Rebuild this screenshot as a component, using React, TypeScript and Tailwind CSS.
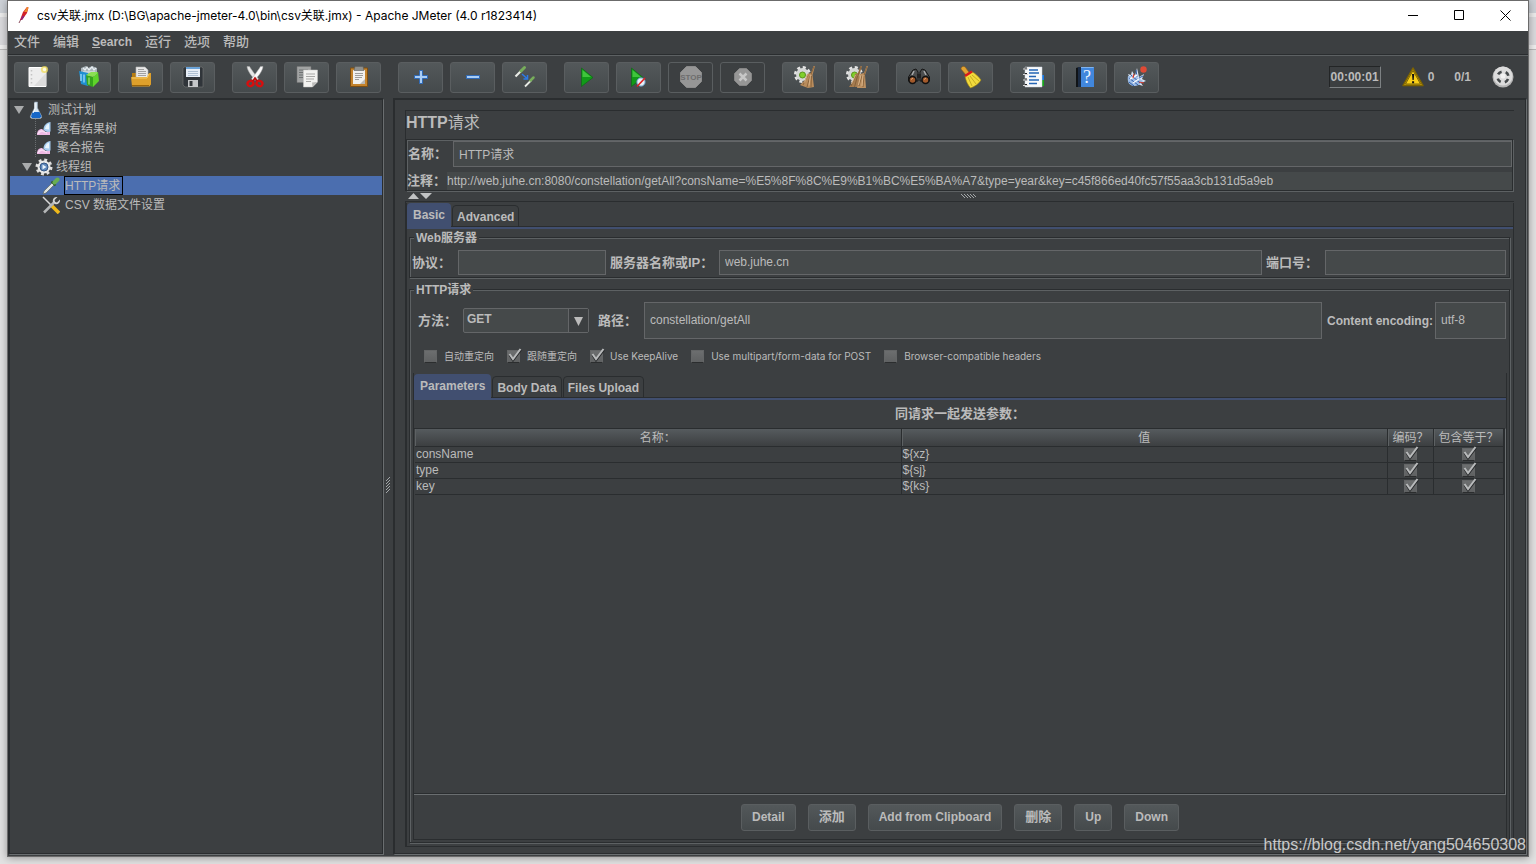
import type { ReactNode } from 'react'
import clsx from 'clsx'

/* ---------- Toolbar icons ---------- */

function Icon({ children, size = 24 }: { children: ReactNode; size?: number }) {
  return (
    <svg width={size} height={size} viewBox={`0 0 ${size} ${size}`} fill="none" aria-hidden="true">
      {children}
    </svg>
  )
}

const NewIcon = () => (
  <Icon>
    <path d="M4 2.5h17v19H4z" fill="#ededed" stroke="#fff" />
    <path d="M6.5 5v14" stroke="#c4c4c4" strokeWidth="1.5" strokeDasharray="1.5 2.5" />
    <path d="M21 8v13H9z" fill="#dcdcdc" />
    <circle cx="19.5" cy="4.5" r="3.6" fill="#f0dc5a" opacity=".75" />
    <circle cx="19.5" cy="4.5" r="1.7" fill="#fffbe0" />
  </Icon>
)

const TemplatesIcon = () => (
  <Icon>
    <path d="M4 3l5-2 2 2 4-2 5 2v8H4z" fill="#a9b4ba" />
    <path d="M6 3l2 2 2-3 2 3 3-3 2 3 2-2M6 7h12" stroke="#e9eff2" strokeWidth="1.2" />
    <path d="M2 6l9 2v13l-7-2z" fill="#1f8fd1" />
    <path d="M4 9v7M7 9.5v8" stroke="#8fd3f5" strokeWidth="1.5" />
    <path d="M9 10l7 2v10l-6-2z" fill="#35a51c" />
    <path d="M16 12l5-5 1 9-6 6z" fill="#5fd32b" />
    <path d="M9 10l5-3 7 0-5 5z" fill="#8be052" />
    <path d="M12 12.5v7" stroke="#b5f08d" />
  </Icon>
)

const OpenIcon = () => (
  <Icon>
    <path d="M3 8h4l2 2h13v10H3z" fill="#b77d12" />
    <path d="M7 2h9l3 3v9H7z" fill="#e9e9e9" stroke="#b5b5b5" strokeWidth=".6" />
    <path d="M9 4.5h6M9 6.5h8M9 8.5h8M9 10.5h8" stroke="#8e8e8e" strokeWidth=".8" />
    <path d="M2 12h16l2-4h2v11l-1.5 2.5H3z" fill="#dea02b" />
    <path d="M3 13h15l2-4" stroke="#f6cd6a" />
    <path d="M3 20.5h17" stroke="#9c6508" />
  </Icon>
)

const SaveIcon = () => (
  <Icon>
    <path d="M3 2h18l1 1v19H4l-2-2V3z" fill="#30353a" stroke="#777" strokeWidth=".6" />
    <path d="M5 2h14v10H5z" fill="#e6edf6" />
    <path d="M5 2h14v2H5z" fill="#6ba3d8" />
    <path d="M7 6.5h10M7 8.5h10M7 10.5h10" stroke="#a1b4ca" strokeWidth=".8" />
    <path d="M7 15h10v7H7z" fill="#c5c7c9" />
    <path d="M8.5 16h3v5h-3z" fill="#34383c" />
  </Icon>
)

const CutIcon = () => (
  <Icon>
    <path d="M4 1.5C4.5 6 9 12 13.5 16l2-2C12.5 10 8.5 5 6.5 1.5z" fill="#e6e6e6" stroke="#aaa" strokeWidth=".5" />
    <path d="M20 1.5C19.5 6 15 12 10.5 16l-2-2c3-4 7-9 9-12.5z" fill="#fafafa" stroke="#aaa" strokeWidth=".5" />
    <ellipse cx="7.5" cy="18.5" rx="3" ry="2.5" stroke="#d40f0f" strokeWidth="2.4" transform="rotate(-30 7.5 18.5)" />
    <ellipse cx="16.5" cy="18.5" rx="3" ry="2.5" stroke="#d40f0f" strokeWidth="2.4" transform="rotate(30 16.5 18.5)" />
    <path d="M10 16l2-3 2 3" stroke="#b80c0c" strokeWidth="1.8" />
  </Icon>
)

const CopyIcon = () => (
  <Icon>
    <path d="M2 1.5h14v16H2z" fill="#a1a3a3" stroke="#777" strokeWidth=".5" />
    <path d="M4 5h9M4 7.5h4M4 10h4M4 12.5h4" stroke="#6f7272" />
    <path d="M8.5 5h14v12l-5 5h-9z" fill="#f2f2f0" stroke="#c7c7c5" strokeWidth=".5" />
    <path d="M11 9h9M11 11.5h9M11 14h8M11 16.5h5" stroke="#a7a7a5" />
    <path d="M22 17l-4.5 5-.5-4.5z" fill="#bcbcba" />
  </Icon>
)

const PasteIcon = () => (
  <Icon>
    <path d="M3.5 3h17v18.5h-17z" fill="#c3832c" stroke="#7d4e12" />
    <path d="M6 5h12v14H6z" fill="#f1f1ef" />
    <path d="M8 1.5h8l1 4H7z" fill="#8e908e" stroke="#5e605e" strokeWidth=".6" />
    <path d="M8 8.5h8M8 10.5h8M8 12.5h7M8 14.5h4" stroke="#949492" strokeWidth=".9" />
    <path d="M18 14l-5 5h5z" fill="#b9b9b7" />
  </Icon>
)

const PlusIcon = () => (
  <Icon>
    <path d="M10.5 5.5h3v5h5v3h-5v5h-3v-5h-5v-3h5z" fill="#a9cdf5" stroke="#2f6ab8" />
  </Icon>
)

const MinusIcon = () => (
  <Icon>
    <path d="M5.5 10.5h13v3h-13z" fill="#a9cdf5" stroke="#2f6ab8" />
  </Icon>
)

const ToggleIcon = () => (
  <Icon>
    <path d="M2.5 11.5l6-6" stroke="#e9ebe6" strokeWidth="2.2" />
    <path d="M8 6l3.5-3.5" stroke="#77ad5b" strokeWidth="3" strokeLinecap="round" />
    <path d="M12 21.5l6-6" stroke="#e9ebe6" strokeWidth="1.8" />
    <path d="M17.5 15.5l3-3" stroke="#77ad5b" strokeWidth="2.5" strokeLinecap="round" />
    <path d="M9 9l5 4.5M14.5 10v4h-4" stroke="#2d79e6" strokeWidth="1.5" />
  </Icon>
)

const StartIcon = () => (
  <Icon>
    <path d="M6.5 3l11.5 9.5-11.5 9z" fill="#119a18" stroke="#0a6410" strokeWidth=".6" />
    <path d="M7.5 5l8.5 7H7.500z" fill="#3fc43c" />
  </Icon>
)

const StartNoTimersIcon = () => (
  <Icon>
    <path d="M4.5 3l11.5 9.5-11.5 9z" fill="#119a18" stroke="#0a6410" strokeWidth=".6" />
    <path d="M5.5 5l8.5 7H5.500z" fill="#3fc43c" />
    <circle cx="14" cy="17" r="4.2" fill="#e5f0f8" stroke="#5b8db5" />
    <path d="M10 21.5l8-8.5" stroke="#e22020" strokeWidth="1.6" />
  </Icon>
)

const StopIcon = () => (
  <Icon>
    <path d="M7.5 1.5h9l6 6v9l-6 6h-9l-6-6v-9z" fill="#969696" stroke="#8b8b8b" />
    <text x="12" y="15" textAnchor="middle" fontSize="8" fontWeight="bold" fontFamily="Liberation Sans Narrow, Liberation Sans" fill="#6d6d6d">
      STOP
    </text>
  </Icon>
)

const ShutdownIcon = () => (
  <Icon>
    <path d="M8.5 3.5h7l5 5v7l-5 5h-7l-5-5v-7z" fill="#969696" stroke="#858585" />
    <path d="M8.5 8.5l7 7M15.5 8.5l-7 7" stroke="#c7c7c7" strokeWidth="2.5" />
  </Icon>
)

const GearShape = () => (
  <>
    <circle cx="9.5" cy="9.5" r="7" stroke="#e4e4e4" strokeWidth="3" strokeDasharray="3 2.5" />
    <circle cx="9.5" cy="9.5" r="6.5" fill="#d5d7d6" />
    <circle cx="9.5" cy="10" r="3" fill="#7fd02b" stroke="#5a941d" />
  </>
)

const ClearIcon = () => (
  <Icon>
    <GearShape />
    <path d="M20.5 1H22l-2.5 9L21 22l-6 1-8-3 5-5 2-6 4-1z" fill="#b98c5c" />
    <path d="M21 1.5l-3.500 9M15 10l-5 10M17 11l-3 11M18.5 11l-.5 11" stroke="#7f5a33" strokeWidth=".8" />
    <path d="M14.5 9.5l-3 8M17.5 9.500l-1.500 11" stroke="#dcb88d" strokeWidth=".9" />
  </Icon>
)

const ClearAllIcon = () => (
  <Icon>
    <GearShape />
    <path d="M15.5 1H17l-2.500 9L16 22H4l5-7 1-6 3-1z" fill="#a67c50" />
    <path d="M21.5 1H23l-3 9 1 13h-9l2-8 1-6 4-1z" fill="#bd9162" />
    <path d="M16 1.5l-3 9M11 10L6 21M12.5 11l-3 11M22 1.5l-3 9M17 10l-3 11M19 11l-1 11" stroke="#7f5a33" strokeWidth=".8" />
    <path d="M10.5 10l-4 9M16 10l-2.500 10M18 10l-1 11" stroke="#dcb88d" strokeWidth=".9" />
  </Icon>
)

const SearchIcon = () => (
  <Icon>
    <path d="M6 5l3-1 2 3v9H1.5v-4z" fill="#4b4d4e" stroke="#161616" />
    <path d="M18 5l-3-1-2 3v9h9.5v-4z" fill="#4b4d4e" stroke="#161616" />
    <path d="M5 10l2-4M19 10l-2-4" stroke="#a9abac" strokeWidth="1.5" />
    <path d="M10 9h4v4h-4z" fill="#222" />
    <circle cx="5.5" cy="15" r="3.5" fill="#a35a2b" stroke="#111" strokeWidth="1.5" />
    <circle cx="18.5" cy="15" r="3.5" fill="#a35a2b" stroke="#111" strokeWidth="1.5" />
    <path d="M4 14.5L6 13M17 14.5l2-1.5" stroke="#e2a474" />
  </Icon>
)

const BroomIcon = () => (
  <Icon>
    <path d="M2 4c0-2.5 3-3.5 4.5-1.5L10.500 8 7 10z" fill="#e0a333" stroke="#99600e" strokeWidth=".6" />
    <path d="M6 11l6.5-4.5c4 2 7 5 9.5 8.5-2 3.5-6 6.5-10.5 8-3-3.5-4.500-7-5.500-12z" fill="#f1da3c" stroke="#a98d0f" strokeWidth=".6" />
    <path d="M6 11l7-4.5" stroke="#d81a1a" strokeWidth="2.5" />
    <path d="M9 12l4 9M11 11l6 8M13 10l7 6" stroke="#b79f1a" strokeWidth=".8" />
  </Icon>
)

const FunctionHelperIcon = () => (
  <Icon>
    <path d="M18 10h5v6h-5z" fill="#1877e0" />
    <path d="M18 15h5v6h-5z" fill="#17a51c" />
    <path d="M4 2h17v20H4z" fill="#f7f9fb" stroke="#cfd6dc" strokeWidth=".5" />
    <path d="M4 3.5h2M4 9h2M4 14.5h2M4 20h2" stroke="#222" strokeWidth="2" />
    <path d="M2 4h5M2 9.5h5M2 15h5M2 20.5h5" stroke="#d6d6d6" />
    <path d="M8 5h9M8 8h10M8 11.5h7M8 15h10M8 18.5h8" stroke="#2465b5" strokeWidth="1.3" />
  </Icon>
)

const HelpIcon = () => (
  <Icon>
    <path d="M3 3l3-1v20H3z" fill="#111417" />
    <path d="M5 2h16v20H5z" fill="#4187dd" />
    <path d="M5 2h3v20H5z" fill="#1c2c44" />
    <path d="M8 2.5h12.5" stroke="#80b3ee" />
    <text x="14" y="18" textAnchor="middle" fontSize="18" fontFamily="Liberation Serif" fill="#eef5ff">
      ?
    </text>
  </Icon>
)

const UndoIcon = () => (
  <Icon>
    <path d="M3 9l3 1 1-4 3 5 2-8 2 9 5-3-2 5 4 2-5 2 2 3-6-2-4 1z" fill="#d7e4f5" />
    <path d="M3 11c-1 6 1 9 5 10 5 0 8-2 10-5l-8-5z" fill="#9dbde6" />
    <path d="M4 13l9 7M6 10l9 8M4 17l5 4M11 5l1 7M14 13l4-2" stroke="#2f5fae" strokeWidth="1" />
    <path d="M5 14l7-4M8 18l6-4" stroke="#f6f9fd" strokeWidth="1.5" />
    <path d="M9 9l-1 4M14 17l5 1" stroke="#cf3a2e" strokeWidth="1.2" />
    <circle cx="18.5" cy="4.5" r="3.2" fill="#df4a35" />
  </Icon>
)

const WarningIcon = () => (
  <svg width="22" height="20" viewBox="0 0 22 20" aria-hidden="true">
    <path d="M11 1L21 18.5H1z" fill="#e0b414" stroke="#7d6300" strokeWidth="1.5" strokeLinejoin="round" />
    <path d="M11 3.5L18.500 17h-15z" fill="#f9cf18" stroke="#4c3f00" strokeWidth=".7" />
    <path d="M10 7h2.200l-.5 6h-1.200zM10.100 14.300h2v2h-2z" fill="#111" />
  </svg>
)

const ExpandIcon = () => (
  <svg width="22" height="22" viewBox="0 0 22 22" fill="none" aria-hidden="true">
    <circle cx="11" cy="11" r="10.5" fill="#b5b5b5" />
    <circle cx="11" cy="10" r="9.5" fill="#dcdcdc" />
    <circle cx="11" cy="10" r="2.5" fill="#f2f2f2" />
    <circle cx="11" cy="11" r="5.5" stroke="#45494b" strokeWidth="2.6" strokeDasharray="4.3 4.34" strokeDashoffset="-2.2" />
  </svg>
)

/* ---------- Tree icons ---------- */

const FlaskIcon = () => (
  <Icon size={18}>
    <path d="M7.5 1h3v6l4 8c.5 2-.5 2.5-2 2.5h-7c-2 0-2.500-1-2-2.500l4-8z" fill="#d7e6f3" stroke="#93a6b5" strokeWidth=".6" />
    <path d="M5.5 11h7l2 4.5L13 17H5l-1-1.500z" fill="#1667c8" />
    <path d="M8 2v6l-2 4" stroke="#fff" />
  </Icon>
)

const ReportIcon = () => (
  <Icon size={14}>
    <path d="M0 13c0-4 2-6 5-6 2 1 2.500 3 4 3l4-1v4z" fill="#eeb9e4" />
    <path d="M1 12c1-2 2-3 4-3s3 2 5 2" stroke="#f9def5" strokeWidth="1.5" />
    <path d="M6.500 7.500c0-4 3-7 7-7.500v9.500c-3 1-6 0-7-2z" fill="#a8cdf0" />
    <path d="M8 7c.5-3 2-4.500 4-5.500v6z" fill="#e9f4fc" />
  </Icon>
)

const GearIcon = () => (
  <Icon size={18}>
    <circle cx="9" cy="9" r="7" stroke="#dedede" strokeWidth="3" strokeDasharray="2.8 2.7" />
    <circle cx="9" cy="9" r="6.5" fill="#e8e8e8" />
    <circle cx="9" cy="9" r="4" fill="#5d87bb" stroke="#335684" />
    <path d="M7.5 6.5l4 2.5-4 2.5z" fill="#e8f2fc" />
  </Icon>
)

const DropperIcon = () => (
  <Icon size={18}>
    <path d="M1 17l1-3 8-8 2 2-8 8z" fill="#dfe4e2" stroke="#5e6662" strokeWidth=".7" />
    <path d="M9.5 4.5l4 4" stroke="#2d5a27" strokeWidth="2" />
    <path d="M12.5 5.5l3-3" stroke="#69ad52" strokeWidth="4" strokeLinecap="round" />
  </Icon>
)

const ToolsIcon = () => (
  <Icon size={18}>
    <path d="M1 1l9 9" stroke="#d8d8d8" strokeWidth="1.5" />
    <path d="M10 10l7 7" stroke="#efb91a" strokeWidth="3.5" />
    <path d="M2 16.5l11-11" stroke="#b5b7b8" strokeWidth="2.5" />
    <path d="M15.5 1l-3 3 .5 2 2 .5 3-3c.5 3-2 5.500-5 4.500l-2-2c-1-3 1.500-5.500 4.500-5z" fill="#d2d4d5" />
  </Icon>
)

/* ---------- Shared pieces ---------- */

const ETCHED = 'border border-[#2a2d2f] shadow-[1px_1px_0_#5d6163,inset_1px_1px_0_#5d6163]'

interface FieldProps {
  id: string
  value?: string
  className?: string
}

function Field({ id, value = '', className }: FieldProps) {
  return (
    <input
      id={id}
      type="text"
      defaultValue={value}
      className={clsx('min-w-0 border border-[#646668] bg-[#45494a] px-[5px] pb-0.5 outline-none', className)}
    />
  )
}

function Label({ htmlFor, className, children }: { htmlFor: string; className?: string; children: ReactNode }) {
  return (
    <label htmlFor={htmlFor} className={clsx('shrink-0 whitespace-nowrap text-[13px] font-bold', className)}>
      {children}
    </label>
  )
}

function CheckBox({ checked, label, id }: { checked: boolean; label?: string; id?: string }) {
  return (
    <span className="relative inline-block size-[13px] shrink-0">
      <input
        id={id}
        type="checkbox"
        defaultChecked={checked}
        aria-label={label}
        className="peer block size-[13px] appearance-none border border-[#646667] border-b-[#2b2d2e] bg-linear-to-b from-[#6c6e6f] to-[#5f6162]"
      />
      <svg
        width="16"
        height="14"
        viewBox="0 0 16 14"
        fill="none"
        className="pointer-events-none absolute -top-0.5 left-0 hidden peer-checked:block"
      >
        <path d="M2.5 7L6 12.5 14 2" stroke="#26282a" strokeWidth="2" />
        <path d="M2.5 6L6 11l7.5-10" stroke="#b8babb" strokeWidth="2" />
      </svg>
    </span>
  )
}

function Tabs({ tabs }: { tabs: string[] }) {
  return (
    <>
      <div role="tablist" className="flex items-end gap-px border-b border-[#2a2d2f] text-xs font-bold">
        {tabs.map((tab, i) =>
          i === 0 ? (
            <button
              key={tab}
              role="tab"
              aria-selected="true"
              className="-mb-px h-6 rounded-t-sm bg-[#414f70] px-[6px] pb-px"
            >
              {tab}
            </button>
          ) : (
            <button
              key={tab}
              role="tab"
              aria-selected="false"
              className="-mb-px h-[22px] rounded-t-sm border border-[#2a2d2f] px-1 pt-px"
            >
              {tab}
            </button>
          ),
        )}
      </div>
      <div className="h-0.5 shrink-0 bg-[#414f70]" />
    </>
  )
}

function GroupTitle({ children }: { children: ReactNode }) {
  return <span className="absolute -top-2 left-1 bg-[#3c3f41] px-0.5 text-xs leading-4 font-bold">{children}</span>
}

/* ---------- Window parts ---------- */

function TitleBar() {
  return (
    <header className="flex h-[30px] shrink-0 items-center bg-white text-black">
      <svg width="14" height="18" viewBox="0 0 14 18" className="ml-2 shrink-0" aria-hidden="true">
        <path d="M3 16l2-4" stroke="#8a4a5c" />
        <path d="M4 13L7 5l4-5 1.500.5L11 6l-5 7z" fill="#d22128" />
        <path d="M8 5l3-5 1.500.5L11 5z" fill="#f08a2c" />
        <path d="M4.500 12.500l2-4 2 1L6 13z" fill="#91257a" />
      </svg>
      <h1 className="ml-[7px] flex-1 truncate font-['Inter','Noto_Sans_CJK_SC',sans-serif] text-xs">
        csv关联.jmx (D:\BG\apache-jmeter-4.0\bin\csv关联.jmx) - Apache JMeter (4.0 r1823414)
      </h1>
      <div className="flex self-start">
        <button aria-label="Minimize" className="flex h-[29px] w-[46px] items-center justify-center">
          <svg width="11" height="11" viewBox="0 0 11 11" stroke="#000">
            <path d="M0 5.5h10" />
          </svg>
        </button>
        <button aria-label="Maximize" className="flex h-[29px] w-[46px] items-center justify-center">
          <svg width="11" height="11" viewBox="0 0 11 11" stroke="#000" fill="none">
            <path d="M.5.5h9v9h-9z" />
          </svg>
        </button>
        <button aria-label="Close" className="flex h-[29px] w-[46px] items-center justify-center">
          <svg width="11" height="11" viewBox="0 0 11 11" stroke="#000">
            <path d="M.5.5l10 10M10.5.5l-10 10" />
          </svg>
        </button>
      </div>
    </header>
  )
}

const MENUS = ['文件', '编辑', 'Search', '运行', '选项', '帮助']

function MenuBar() {
  return (
    <nav className="flex h-6 shrink-0 items-center gap-[13px] border-b border-[#2a2d2f] px-[6px] pb-px text-[13px] font-bold">
      {MENUS.map((menu) => (
        <button key={menu} className={menu === 'Search' ? 'text-xs' : 'font-medium'}>
          {menu === 'Search' ? (
            <>
              <span className="underline">S</span>earch
            </>
          ) : (
            menu
          )}
        </button>
      ))}
    </nav>
  )
}

interface Tool {
  name: string
  icon: () => ReactNode
  disabled?: boolean
}

const TOOL_GROUPS: Tool[][] = [
  [
    { name: 'New', icon: NewIcon },
    { name: 'Templates', icon: TemplatesIcon },
    { name: 'Open', icon: OpenIcon },
    { name: 'Save', icon: SaveIcon },
  ],
  [
    { name: 'Cut', icon: CutIcon },
    { name: 'Copy', icon: CopyIcon },
    { name: 'Paste', icon: PasteIcon },
  ],
  [
    { name: 'Expand All', icon: PlusIcon },
    { name: 'Collapse All', icon: MinusIcon },
    { name: 'Toggle', icon: ToggleIcon },
  ],
  [
    { name: 'Start', icon: StartIcon },
    { name: 'Start no pauses', icon: StartNoTimersIcon },
    { name: 'Stop', icon: StopIcon, disabled: true },
    { name: 'Shutdown', icon: ShutdownIcon, disabled: true },
  ],
  [
    { name: 'Clear', icon: ClearIcon },
    { name: 'Clear All', icon: ClearAllIcon },
  ],
  [
    { name: 'Search', icon: SearchIcon },
    { name: 'Reset Search', icon: BroomIcon },
  ],
  [
    { name: 'Function Helper', icon: FunctionHelperIcon },
    { name: 'Help', icon: HelpIcon },
    { name: 'Undo', icon: UndoIcon },
  ],
]

function Toolbar() {
  return (
    <div className="flex h-[43px] shrink-0 items-center border-t border-[#5d6163] pr-[14px] pl-[6px]">
      <div className="flex gap-[17px]">
        {TOOL_GROUPS.map((group, i) => (
          <div key={i} className="flex gap-[7px]">
            {group.map(({ name, icon: ToolIcon, disabled }) => (
              <button
                key={name}
                aria-label={name}
                disabled={disabled}
                className={clsx(
                  'flex h-[31px] w-[45px] items-center justify-center rounded-[3px] border border-[#5a5e60]',
                  !disabled && 'bg-linear-to-b from-[#53585a] to-[#454a4c]',
                )}
              >
                <ToolIcon />
              </button>
            ))}
          </div>
        ))}
      </div>
      <div className="ml-auto flex items-center text-xs font-bold">
        <span className="border border-t-[#232526] border-r-[#7d8183] border-b-[#7d8183] border-l-[#232526] px-px py-0.5 leading-4">
          00:00:01
        </span>
        <button className="ml-[21px] flex items-center gap-1">
          <WarningIcon />0
        </button>
        <span className="ml-5">0/1</span>
        <button aria-label="Engines" className="ml-[21px]">
          <ExpandIcon />
        </button>
      </div>
    </div>
  )
}

function TreeArrow() {
  return (
    <svg width="10" height="8" viewBox="0 0 10 8" className="shrink-0" aria-hidden="true">
      <path d="M0 0h10L5 8z" fill="#a9abac" />
    </svg>
  )
}

function TestTree() {
  return (
    <aside className="w-[376px] shrink-0 border-t-2 border-r border-b border-l-2 border-t-[#2a2d2f] border-r-[#6a6e70] border-b-[#6a6e70] border-l-[#2a2d2f] shadow-[inset_-1px_-1px_0_#2a2d2f]">
      <ul role="tree" className="mr-px text-xs">
        <li role="treeitem" className="flex h-[19px] items-center pl-1">
          <TreeArrow />
          <span className="ml-[3px] flex items-center gap-[3px]">
            <FlaskIcon />
            测试计划
          </span>
        </li>
        <li role="treeitem" className="ml-[25px] flex h-[19px] items-center gap-[6px] border-l border-dotted border-[#6a6e70] pl-px">
          <ReportIcon />
          察看结果树
        </li>
        <li role="treeitem" className="ml-[25px] flex h-[19px] items-center gap-[6px] border-l border-dotted border-[#6a6e70] pl-px">
          <ReportIcon />
          聚合报告
        </li>
        <li role="treeitem" className="flex h-[19px] items-center pl-3">
          <TreeArrow />
          <span className="ml-[3px] flex items-center gap-[3px]">
            <GearIcon />
            线程组
          </span>
        </li>
        <li role="treeitem" aria-selected="true" className="flex h-[19px] items-center gap-1 bg-[#4b6eaf] pl-8">
          <DropperIcon />
          <span className="flex h-[19px] items-center border border-black pr-0.5">HTTP请求</span>
        </li>
        <li role="treeitem" className="flex h-[19px] items-center gap-[5px] pl-8">
          <ToolsIcon />
          CSV 数据文件设置
        </li>
      </ul>
    </aside>
  )
}

function Grip({ vertical }: { vertical?: boolean }) {
  return vertical ? (
    <svg width="5" height="16" viewBox="0 0 5 16" stroke="#a3a7a9" aria-hidden="true">
      <path d="M0 4l4-4M0 7l4-4M0 10l4-4M0 13l4-4M0 16l4-4" />
    </svg>
  ) : (
    <svg width="15" height="5" viewBox="0 0 15 5" stroke="#a3a7a9" aria-hidden="true">
      <path d="M0 0l4 4M3 0l4 4M6 0l4 4M9 0l4 4M12 0l3 3" />
    </svg>
  )
}

function NamePanel() {
  return (
    <section className="border-t border-l border-[#2a2d2f]">
      <h2 className="flex h-7 items-center pb-1 text-base font-bold">
        HTTP<span className="font-normal">请求</span>
      </h2>
      <div className={clsx('mr-px pt-px', ETCHED)}>
        <div className="flex items-center">
          <Label htmlFor="name" className="w-[46px] pl-px">
            名称：
          </Label>
          <Field id="name" value="HTTP请求" className="h-[26px] flex-1" />
        </div>
        <div className="mt-[5px] flex h-[18px] items-center">
          <Label htmlFor="comment" className="w-10">
            注释：
          </Label>
          <input
            id="comment"
            type="text"
            defaultValue="http://web.juhe.cn:8080/constellation/getAll?consName=%E5%8F%8C%E9%B1%BC%E5%BA%A7&type=year&key=c45f866ed40fc57f55aa3cb131d5a9eb"
            className="h-[18px] min-w-0 flex-1 bg-[#45494a] outline-none"
          />
        </div>
      </div>
    </section>
  )
}

function WebServerGroup() {
  return (
    <div role="group" className={clsx('relative flex items-center pt-3 pr-[3px] pb-0.5 pl-0.5', ETCHED)}>
      <GroupTitle>Web服务器</GroupTitle>
      <Label htmlFor="protocol" className="w-[46px]">
        协议：
      </Label>
      <Field id="protocol" className="h-[25px] w-[148px]" />
      <Label htmlFor="server" className="ml-1 w-[109px]">
        服务器名称或IP：
      </Label>
      <Field id="server" value="web.juhe.cn" className="h-[25px] flex-1" />
      <Label htmlFor="port" className="ml-1 w-[59px]">
        端口号：
      </Label>
      <Field id="port" className="h-[25px] w-[181px]" />
    </div>
  )
}

const OPTIONS = [
  { id: 'redirect', label: '自动重定向', checked: false },
  { id: 'follow', label: '跟随重定向', checked: true },
  { id: 'keepalive', label: 'Use KeepAlive', checked: true },
  { id: 'multipart', label: 'Use multipart/form-data for POST', checked: false },
  { id: 'browser', label: 'Browser-compatible headers', checked: false },
]

const PARAMETERS = [
  { name: 'consName', value: '${xz}' },
  { name: 'type', value: '${sj}' },
  { name: 'key', value: '${ks}' },
]

const ACTIONS = [
  { label: 'Detail' },
  { label: '添加', chinese: true },
  { label: 'Add from Clipboard' },
  { label: '删除', chinese: true },
  { label: 'Up' },
  { label: 'Down' },
]

function ParameterTable() {
  const th =
    'h-[18px] border-r border-b border-[#2a2d2f] bg-linear-to-b from-[#565b5e] to-[#3c3f41] p-0 pt-0.5 font-normal shadow-[inset_1px_0_0_#5d6163]'
  const td = 'h-4 border-r border-b border-[#2a2d2f] p-0'
  return (
    <div className="min-h-0 flex-1 border-t border-r border-b border-t-[#2a2d2f] border-r-[#6a6e70] border-b-[#6a6e70] shadow-[inset_-1px_-1px_0_#2a2d2f]">
      <table className="w-full table-fixed border-separate border-spacing-0 px-px text-xs leading-[15px]">
        <colgroup>
          <col />
          <col />
          <col className="w-[46px]" />
          <col className="w-[70px]" />
        </colgroup>
        <thead>
          <tr>
            <th className={th}>名称：</th>
            <th className={th}>值</th>
            <th className={clsx(th, 'whitespace-nowrap')}>编码？</th>
            <th className={clsx(th, 'whitespace-nowrap')}>包含等于？</th>
          </tr>
        </thead>
        <tbody>
          {PARAMETERS.map(({ name, value }) => (
            <tr key={name}>
              <td className={clsx(td, 'pl-px')}>{name}</td>
              <td className={clsx(td, 'pl-px')}>{value}</td>
              <td className={td}>
                <div className="flex justify-center">
                  <CheckBox checked label={`编码 ${name}`} />
                </div>
              </td>
              <td className={td}>
                <div className="flex justify-center">
                  <CheckBox checked label={`包含等于 ${name}`} />
                </div>
              </td>
            </tr>
          ))}
        </tbody>
      </table>
    </div>
  )
}

function RequestGroup() {
  return (
    <div role="group" className={clsx('relative mt-[11px] flex min-h-0 flex-1 flex-col pt-3 pr-0.5 pb-0.5 pl-[3px]', ETCHED)}>
      <GroupTitle>HTTP请求</GroupTitle>
      <div className="flex items-center pr-px pl-[5px]">
        <Label htmlFor="method" className="w-[45px]">
          方法：
        </Label>
        <div className="relative h-[25px] w-[126px] shrink-0">
          <select
            id="method"
            className="size-full appearance-none rounded-[2px] border border-[#646668] bg-[#45494a] px-[3px] pb-[3px] font-bold outline-none"
          >
            <option>GET</option>
            <option>POST</option>
          </select>
          <span className="pointer-events-none absolute inset-y-px right-px flex w-5 items-center justify-center border-l border-[#646668] bg-[#3c3f41] pt-0.5">
            <svg width="9" height="9" viewBox="0 0 9 9" aria-hidden="true">
              <path d="M0 0h9L4.5 9z" fill="#bbb" />
            </svg>
          </span>
        </div>
        <Label htmlFor="path" className="ml-[9px] w-[46px]">
          路径：
        </Label>
        <Field id="path" value="constellation/getAll" className="h-[37px] flex-1" />
        <label htmlFor="encoding" className="ml-[5px] w-[108px] shrink-0 text-xs font-bold whitespace-nowrap">
          Content encoding:
        </label>
        <Field id="encoding" value="utf-8" className="h-[37px] w-[71px]" />
      </div>

      <div className="flex h-[34px] items-center gap-[13px] pt-0.5 pl-[11px] font-['Inter','Noto_Sans_CJK_SC',sans-serif] text-[10px]">
        {OPTIONS.map(({ id, label, checked }) => (
          <span key={id} className="flex items-center gap-[7px]">
            <CheckBox id={id} checked={checked} />
            <label htmlFor={id}>{label}</label>
          </span>
        ))}
      </div>

      <div className="flex min-h-0 flex-1 flex-col border-r border-b border-l border-[#2a2d2f] pt-px">
        <Tabs tabs={['Parameters', 'Body Data', 'Files Upload']} />
        <p className="flex h-7 shrink-0 items-center justify-center text-[13px] font-bold">同请求一起发送参数：</p>
        <ParameterTable />
        <div className="flex shrink-0 justify-center gap-3 pt-[9px] pb-2 text-xs font-bold">
          {ACTIONS.map(({ label, chinese }) => (
            <button
              key={label}
              className={clsx(
                'h-[27px] rounded-[3px] border border-[#5a5e60] bg-linear-to-b from-[#53585a] to-[#454a4c] px-[10px] pb-px',
                chinese && 'text-[13px]',
              )}
            >
              {label}
            </button>
          ))}
        </div>
      </div>
    </div>
  )
}

function SamplerPanel() {
  return (
    <main className="flex min-w-0 flex-1 flex-col border-t-2 border-r border-b border-l-2 border-t-[#2a2d2f] border-r-[#6a6e70] border-b-[#6a6e70] border-l-[#2a2d2f] pt-[10px] pr-3 pb-[7px] pl-[10px] text-xs shadow-[inset_-1px_-1px_0_#2a2d2f]">
      <NamePanel />
      <div className="flex h-[10px] shrink-0 items-center pl-[3px]">
        <svg width="24" height="6" viewBox="0 0 24 6" aria-hidden="true">
          <path d="M0 6l5.500-6L11 6zM12 0h12l-6 6z" fill="#c0c2c3" />
        </svg>
        <span className="flex flex-1 justify-center pr-[10px]">
          <Grip />
        </span>
      </div>
      <div className="flex min-h-0 flex-1 flex-col border-t border-l border-[#2a2d2f] pt-px">
        <div className="flex min-h-0 flex-1 flex-col border-r border-b border-l border-[#2a2d2f]">
          <Tabs tabs={['Basic', 'Advanced']} />
          <div className="flex min-h-0 flex-1 flex-col pt-2 pr-[3px] pb-[3px] pl-0.5">
            <WebServerGroup />
            <RequestGroup />
          </div>
        </div>
      </div>
    </main>
  )
}

export default function App() {
  return (
    <div className="relative flex h-screen flex-col bg-[linear-gradient(#cdd1d7_13px,#ececec_13px,#ececec_17px,#dadadd_17px,#dadadd_45px,#efefef_45px,#efefef_49px,#b9b9b9_49px,#b9b9b9_50px,#e2e2e2_50px)] px-[7px] pb-[7px] font-['Liberation_Sans','Noto_Sans_CJK_SC',sans-serif] text-[#bbbbbb]">
      <div className="flex min-h-0 flex-1 flex-col border border-[#6b6b6b] bg-[#3c3f41] shadow-[0_1px_8px_rgba(0,0,0,0.35)]">
        <TitleBar />
        <MenuBar />
        <Toolbar />
        <div className="flex min-h-0 flex-1 pr-px pb-px">
          <TestTree />
          <div className="flex w-[9px] shrink-0 items-center justify-center pt-4">
            <Grip vertical />
          </div>
          <SamplerPanel />
        </div>
      </div>
      <a
        href="https://blog.csdn.net/yang504650308"
        className="absolute right-[10px] bottom-[9px] text-base leading-5 text-[#c9c9c9]"
      >
        https://blog.csdn.net/yang504650308
      </a>
    </div>
  )
}
